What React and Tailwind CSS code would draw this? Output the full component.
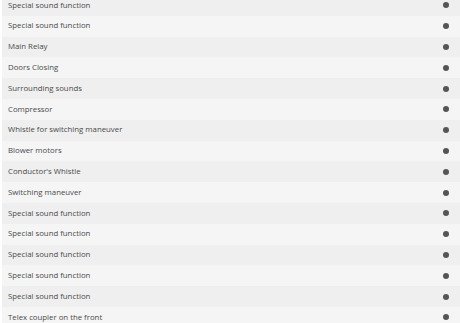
const functions = [
    'Special sound function',
    'Special sound function',
    'Main Relay',
    'Doors Closing',
    'Surrounding sounds',
    'Compressor',
    'Whistle for switching maneuver',
    'Blower motors',
    "Conductor's Whistle",
    'Switching maneuver',
    'Special sound function',
    'Special sound function',
    'Special sound function',
    'Special sound function',
    'Special sound function',
    'Telex coupler on the front',
];

const App = () => {
    return (
        <div className="w-[460px] h-[323px] overflow-hidden bg-white pl-[2px]">
            <ul className="-mt-[5px]" style={{ fontFamily: '"Open Sans", sans-serif' }}>
                {functions.map((name, i) => (
                    <li
                        key={i}
                        className={`h-[20.8px] flex items-center justify-between pl-[6px] pr-[11px] text-[7.8px] text-[#4a4a4a] ${i % 2 === 0 ? 'bg-[#efefef]' : 'bg-[#f5f5f5]'}`}
                    >
                        <span>{name}</span>
                        <span className="w-[6px] h-[6px] rounded-full bg-[#555]" />
                    </li>
                ))}
            </ul>
        </div>
    );
};

export default App;
